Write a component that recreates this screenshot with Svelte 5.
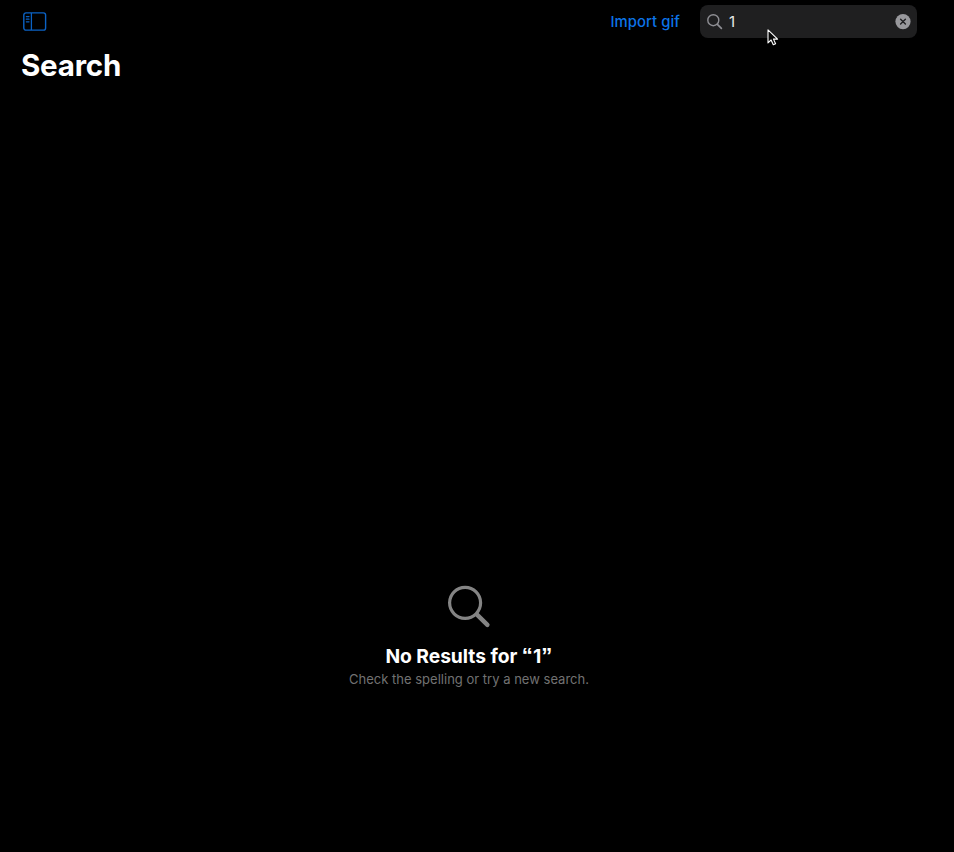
<script>
  let query = $state('1');
</script>

<div class="app">
  <header class="toolbar">
    <button class="plain sidebar" aria-label="Toggle sidebar">
      <svg width="24" height="19" viewBox="0 0 24 19" fill="none" stroke="#0b62c4">
        <rect x="0.8" y="0.9" width="21.8" height="17.2" rx="2.2" stroke-width="1.4" />
        <path d="M8.4 1v17" stroke-width="1.3" />
        <path d="M3.4 4.6h2.6M3.4 7.2h2.6M3.4 9.8h2.6" stroke-width="1.3" stroke-linecap="round" />
      </svg>
    </button>
    <button class="plain import">Import gif</button>
    <div class="field">
      <svg class="lens" width="16" height="16" viewBox="0 0 16 16" fill="none" stroke="#8e8e93" stroke-linecap="round">
        <circle cx="6.3" cy="6.2" r="5.5" stroke-width="1.4" />
        <path d="M10.4 10.4l4 4" stroke-width="1.7" />
      </svg>
      <input type="text" aria-label="Search" bind:value={query} />
      <button class="plain clear" aria-label="Clear" onclick={() => (query = '')}>
        <svg width="16" height="16" viewBox="0 0 16 16">
          <circle cx="8" cy="7.6" r="7.6" fill="#98989c" />
          <path d="M5.6 5.2l4.8 4.8M10.4 5.2l-4.8 4.8" stroke="#202022" stroke-width="1.4" stroke-linecap="round" />
        </svg>
      </button>
    </div>
  </header>
  <h1>Search</h1>
  <main>
    <svg class="glass" width="44" height="44" viewBox="0 0 44 44" fill="none" stroke="#848484" stroke-linecap="round">
      <circle cx="18.1" cy="17.8" r="15.5" stroke-width="3.2" />
      <path d="M30 29.6l10.4 10.3" stroke-width="4.4" />
    </svg>
    <h2>No Results for <span class="quote">“</span>{query}<span class="quote">”</span></h2>
    <p>Check the spelling or try a new search.</p>
  </main>
  <svg class="pointer" width="12" height="20" viewBox="0 0 12 20">
    <path d="M1 1.8v13.1l3.1-2.9 2.2 4.8 2.3-1-2.1-4.7h4.1z" fill="#080808" stroke="#fff" stroke-width="1.1" stroke-linejoin="round" />
  </svg>
</div>

<style>
  :global(body) {
    background: #000;
  }
  .app {
    position: relative;
    box-sizing: border-box;
    width: 954px;
    height: 852px;
    padding: 5px 37px 0 22px;
    background: #000;
    color: #fff;
    font-family: Inter, "Liberation Sans", sans-serif;
    display: flex;
    flex-direction: column;
    overflow: hidden;
  }
  .toolbar {
    display: flex;
    align-items: center;
    height: 33px;
  }
  .plain {
    border: 0;
    padding: 0;
    background: none;
    font: inherit;
  }
  .plain svg {
    display: block;
  }
  .sidebar {
    margin: 0 auto 0 1px;
  }
  .import {
    color: #0c74e8;
    font-size: 14.8px;
    font-weight: 550;
    letter-spacing: 0.08px;
    margin-right: 20px;
    white-space: nowrap;
  }
  .field {
    box-sizing: border-box;
    display: flex;
    align-items: center;
    width: 217px;
    height: 33px;
    padding: 0 6px 0 7px;
    border-radius: 8px;
    background: #1f1f20;
  }
  .lens {
    flex: none;
  }
  input {
    flex: 1;
    min-width: 0;
    border: 0;
    outline: 0;
    padding: 0 0 0 6px;
    background: none;
    color: #e8e8e8;
    font: 15px Inter, "Liberation Sans", sans-serif;
  }
  h1 {
    margin: 8px 0 0 -1px;
    font-size: 29.5px;
    line-height: 38px;
    font-weight: 700;
    letter-spacing: -0.2px;
  }
  main {
    display: flex;
    flex-direction: column;
    align-items: center;
    margin: 501px 0 0 -22px;
    width: 938px;
  }
  h2 {
    margin: 15px 0 0;
    font-size: 19.3px;
    line-height: 24px;
    font-weight: 700;
    letter-spacing: -0.05px;
    white-space: nowrap;
  }
  .quote {
    font-family: "Liberation Sans", Arial, sans-serif;
    font-size: 22px;
    line-height: 1;
    letter-spacing: 0.3px;
  }
  p {
    margin: 2px 0 0;
    font-size: 13px;
    line-height: 18px;
    color: #727272;
    letter-spacing: 0.01px;
    white-space: nowrap;
  }
  .pointer {
    position: absolute;
    left: 767px;
    top: 28px;
  }
</style>
